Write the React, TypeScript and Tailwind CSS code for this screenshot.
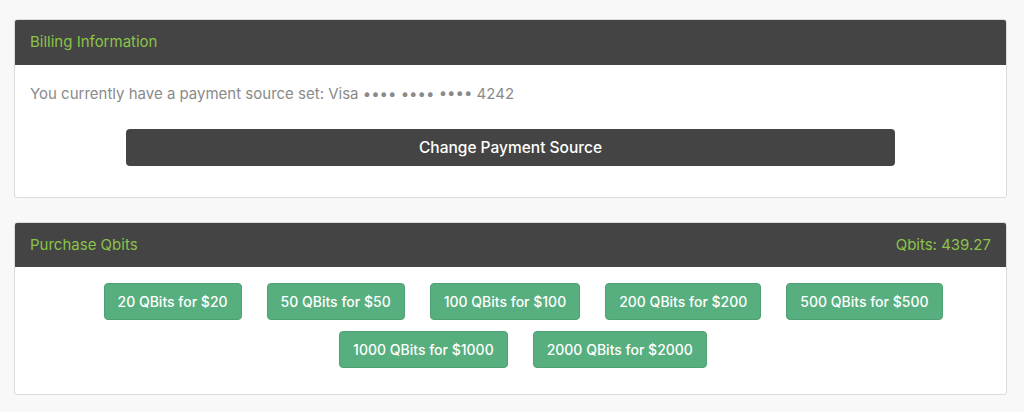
import React from "react";

const packs: [number, number][] = [
  [20, 20],
  [50, 50],
  [100, 100],
  [200, 200],
  [500, 500],
  [1000, 1000],
  [2000, 2000],
];

export default function App() {
  return (
    <div
      className="min-h-[412px] w-full bg-[#f8f8f8] pl-[14px] pr-[17px] pt-[19px]"
      style={{ fontFamily: "Inter, 'Noto Sans', sans-serif" }}
    >
      <div className="overflow-hidden rounded-[3px] border border-[#dcdcdc] bg-white">
        <div className="flex h-[45px] items-center bg-[#444444] px-[15px] text-[15px] text-[#8bc34a]">
          Billing Information
        </div>
        <div className="px-[15px] pb-[31px] pt-[17px]">
          <p className="text-[15px] leading-[24px] text-[#8a8a8a]">
            You currently have a payment source set: Visa •••• •••• •••• 4242
          </p>
          <div className="mt-[23px] flex justify-center">
            <button className="h-[37px] w-[769px] rounded-[4px] bg-[#444444] text-[15.5px] font-medium text-white">
              Change Payment Source
            </button>
          </div>
        </div>
      </div>

      <div className="mt-[24px] overflow-hidden rounded-[3px] border border-[#dcdcdc] bg-white">
        <div className="flex h-[44px] items-center justify-between bg-[#444444] px-[15px] text-[15px] text-[#8bc34a]">
          <span>Purchase Qbits</span>
          <span>Qbits: 439.27</span>
        </div>
        <div className="flex flex-wrap justify-center gap-y-[11px] px-[15px] pb-[26px] pt-[16px]">
          {packs.map(([q, p]) => (
            <button
              key={q}
              className="ml-[25px] h-[37px] rounded-[4px] border border-[#4e9f71] bg-[#57ae7e] px-[13px] text-[14px] font-medium text-white"
            >
              {q} QBits for ${p}
            </button>
          ))}
        </div>
      </div>
    </div>
  );
}
